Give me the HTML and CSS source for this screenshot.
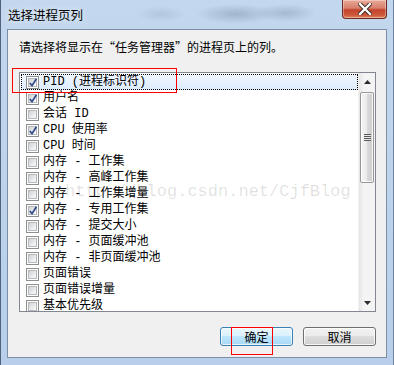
FILE: index.html
```html
<!DOCTYPE html>
<html>
<head>
<meta charset="utf-8">
<link rel="stylesheet" href="styles.css">
</head>
<body>
<div class="window">
  <div class="titlebar">
    <span class="title">选择进程页列</span>
    <div class="close">
      <svg width="14" height="12" viewBox="0 0 14 12"><path d="M2 1 L12 11 M12 1 L2 11" stroke="#3a2620" stroke-width="4.2" stroke-linecap="square"/><path d="M2 1 L12 11 M12 1 L2 11" stroke="#ffffff" stroke-width="2.4" stroke-linecap="square"/></svg>
    </div>
  </div>
  <div class="client">
    <p class="prompt">请选择将显示在“任务管理器”的进程页上的列。</p>
    <div class="listbox">
      <ul class="items">
        <li class="row selected"><span class="cb on"></span>PID (进程标识符)</li>
        <li class="row"><span class="cb on"></span>用户名</li>
        <li class="row"><span class="cb"></span>会话 ID</li>
        <li class="row"><span class="cb on"></span>CPU 使用率</li>
        <li class="row"><span class="cb"></span>CPU 时间</li>
        <li class="row"><span class="cb"></span>内存 - 工作集</li>
        <li class="row"><span class="cb"></span>内存 - 高峰工作集</li>
        <li class="row"><span class="cb"></span>内存 - 工作集增量</li>
        <li class="row"><span class="cb on"></span>内存 - 专用工作集</li>
        <li class="row"><span class="cb"></span>内存 - 提交大小</li>
        <li class="row"><span class="cb"></span>内存 - 页面缓冲池</li>
        <li class="row"><span class="cb"></span>内存 - 非页面缓冲池</li>
        <li class="row"><span class="cb"></span>页面错误</li>
        <li class="row"><span class="cb"></span>页面错误增量</li>
        <li class="row"><span class="cb"></span>基本优先级</li>
      </ul>
      <div class="scrollbar">
        <div class="arrow up"><svg width="7" height="4" viewBox="0 0 7 4"><path d="M0 4 L3.5 0 L7 4 Z" fill="#2b2b2b"/></svg></div>
        <div class="thumb"><span class="grip"></span></div>
        <div class="track"></div>
        <div class="arrow down"><svg width="7" height="4" viewBox="0 0 7 4"><path d="M0 0 L3.5 4 L7 0 Z" fill="#2b2b2b"/></svg></div>
      </div>
    </div>
    <div class="buttons">
      <button class="btn default">确定</button>
      <button class="btn">取消</button>
    </div>
  </div>
  <div class="bottomframe"></div>
  <div class="watermark">http://blog.csdn.net/CjfBlog</div>
  <div class="mark mark-pid"></div>
  <div class="mark mark-ok"></div>
</div>
</body>
</html>
```
FILE: styles.css
```css
* { box-sizing: border-box; }
html, body { margin: 0; padding: 0; }
body {
  width: 394px;
  height: 365px;
  overflow: hidden;
  font-family: "Liberation Mono", "Noto Sans CJK SC", monospace;
  font-size: 12px;
  color: #000;
}
.window {
  position: relative;
  width: 394px;
  height: 365px;
  border-left: 1px solid #4f647c;
  border-right: 1px solid #6f86a0;
  display: flex;
  flex-direction: column;
  background:
    radial-gradient(ellipse 40px 10px at 235px 14px, rgba(120,140,165,0.45), rgba(120,140,165,0)),
    radial-gradient(ellipse 30px 9px at 285px 13px, rgba(120,140,165,0.4), rgba(120,140,165,0)),
    radial-gradient(ellipse 25px 8px at 160px 14px, rgba(140,160,185,0.3), rgba(140,160,185,0)),
    linear-gradient(180deg, #c3d7ee 0%, #bdd3ec 50%, #b7cfea 100%);
}
.titlebar {
  height: 29px;
  flex: none;
  display: flex;
  align-items: flex-start;
  padding-left: 7px;
}
.title {
  margin-top: 7px;
  font-family: "Noto Sans CJK SC", sans-serif;
  font-size: 12.5px;
  line-height: 16px;
  color: #000;
  text-shadow: 0 0 6px rgba(255,255,255,0.9);
}
.close {
  margin-left: auto;
  margin-right: 6px;
  width: 45px;
  height: 19px;
  border: 1px solid #6b2b22;
  border-top: none;
  border-radius: 0 0 4px 4px;
  background: linear-gradient(180deg, #e9a998 0%, #d7806c 45%, #c2432c 55%, #cf5a3c 85%, #e08a60 100%);
  box-shadow: inset 0 0 0 1px rgba(255,255,255,0.35);
  display: flex;
  align-items: center;
  justify-content: center;
}
.client {
  margin: 0 6px 0 6px;
  height: 329px;
  flex: none;
  border: 1px solid #7d8fa4;
  background: #f0f0f0;
  padding: 9px 10px 0 11px;
  display: flex;
  flex-direction: column;
}
.prompt {
  margin: 0;
  font-family: "Noto Sans CJK SC", sans-serif;
  font-size: 12px;
  line-height: 16px;
  height: 16px;
}
.listbox {
  margin-top: 17px;
  width: 357px;
  height: 240px;
  border: 1px solid #828790;
  background: #fff;
  display: flex;
  overflow: hidden;
}
.items {
  list-style: none;
  margin: 0;
  padding: 1px 0 0 1px;
  flex: 1;
  overflow: hidden;
}
.row {
  height: 16px;
  line-height: 16px;
  display: flex;
  align-items: center;
  padding-left: 5px;
  white-space: pre;
  font-family: "Liberation Mono", "Noto Sans CJK SC", monospace;
  font-size: 12px;
}
.row.selected {
  background: linear-gradient(180deg, #f0f7ff 0%, #dcebfc 100%);
  outline: 1px dotted #000;
  outline-offset: -1px;
}
.cb {
  width: 13px;
  height: 13px;
  flex: none;
  margin-right: 4px;
  border: 1px solid #8f8f8f;
  background: #fff;
  position: relative;
}
.cb::before {
  content: "";
  position: absolute;
  left: 1px; top: 1px; right: 1px; bottom: 1px;
  border: 1px solid #b6b9bd;
  background: linear-gradient(135deg, #cfd1d4 0%, #e9eaeb 55%, #fbfbfb 100%);
}
.cb.on::after {
  content: "";
  position: absolute;
  left: 2px; top: 1px;
  width: 8px; height: 9px;
  background: url("data:image/svg+xml;utf8,<svg xmlns='http://www.w3.org/2000/svg' width='8' height='9' viewBox='0 0 8 9'><path d='M0.8 5 L3 7.6 L7.4 0.8' fill='none' stroke='%23324a8a' stroke-width='1.7'/></svg>") no-repeat;
}
.scrollbar {
  width: 17px;
  flex: none;
  display: flex;
  flex-direction: column;
  background: linear-gradient(90deg, #e6e6e6 0%, #f4f4f4 30%, #f4f4f4 100%);
  border-left: 1px solid #f0f0f0;
}
.arrow {
  height: 17px;
  flex: none;
  display: flex;
  align-items: center;
  justify-content: center;
}
.thumb {
  margin-top: 2px;
  height: 91px;
  flex: none;
  margin-left: 1px;
  margin-right: 1px;
  border: 1px solid #979797;
  border-radius: 2px;
  background: linear-gradient(90deg, #f5f5f5 0%, #ececec 45%, #d8d8d8 55%, #cfcfcf 100%);
  box-shadow: inset 0 0 0 1px rgba(255,255,255,0.8);
  display: flex;
  align-items: center;
  justify-content: center;
}
.grip {
  width: 7px;
  height: 7px;
  background: repeating-linear-gradient(180deg, #5a5a5a 0 1px, #e8e8e8 1px 2px);
}
.track { flex: 1; }
.buttons {
  margin-top: 15px;
  display: flex;
  justify-content: flex-end;
  gap: 10px;
  padding-right: 0;
  width: 357px;
}
.btn {
  width: 73px;
  height: 19px;
  padding: 0;
  font-family: "Noto Sans CJK SC", sans-serif;
  font-size: 12px;
  line-height: 15px;
  color: #000;
  border: 1px solid #707070;
  border-radius: 3px;
  background: linear-gradient(180deg, #f2f2f2 0%, #ebebeb 49%, #dddddd 50%, #cfcfcf 100%);
  box-shadow: inset 0 0 0 1px rgba(255,255,255,0.8);
}
.btn.default {
  border-color: #3c7fb1;
  background: linear-gradient(180deg, #eaf6fd 0%, #d9f0fc 49%, #bee6fd 50%, #a7d9f5 100%);
  box-shadow: inset 0 0 0 1px rgba(255,255,255,0.7);
}
.bottomframe { flex: 1; }
.watermark {
  position: absolute;
  left: 64px;
  top: 183px;
  font-family: "Liberation Mono", monospace;
  font-size: 17px;
  line-height: 17px;
  color: rgba(0,0,0,0.13);
  white-space: nowrap;
  pointer-events: none;
}
.mark {
  position: absolute;
  border: 1.5px solid #ff0000;
  pointer-events: none;
}
.mark-pid { left: 11px; top: 68px; width: 165px; height: 25px; }
.mark-ok { left: 230px; top: 327px; width: 42px; height: 28px; }
```
